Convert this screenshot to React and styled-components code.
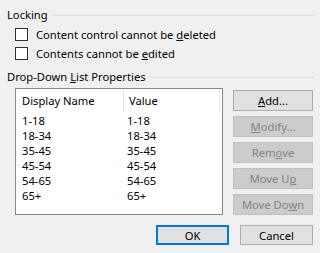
import React from "react";
import styled, { createGlobalStyle } from "styled-components";

const GlobalStyle = createGlobalStyle`
    html, body {
        margin: 0;
        padding: 0;
        background: #f0f0f0;
    }
    body {
        font-family: "Noto Sans", "Liberation Sans", sans-serif;
        font-size: 11.2px;
        color: #000;
    }
`

const rows = [
    ['1-18', '1-18'],
    ['18-34', '18-34'],
    ['35-45', '35-45'],
    ['45-54', '45-54'],
    ['54-65', '54-65'],
    ['65+', '65+'],
];

const sideButtons = [
    { label: <><u>A</u>dd...</>, enabled: true },
    { label: <><u>M</u>odify...</> },
    { label: <>Rem<u>o</u>ve</> },
    { label: <>Move U<u>p</u></> },
    { label: <>Move Do<u>w</u>n</> },
];

//Content control properties dialog (lower part)
const App = () => {
    return (
        <>
            <GlobalStyle />
            <Dialog>
                <GroupHeader top={7}>
                    <span>Locking</span>
                    <Rule />
                </GroupHeader>
                <CheckRow top={5}>
                    <Box />
                    <span>Content control cannot be <u>d</u>eleted</span>
                </CheckRow>
                <CheckRow top={6}>
                    <Box />
                    <span>Contents cannot be <u>e</u>dited</span>
                </CheckRow>
                <GroupHeader top={9}>
                    <span>Drop-Down <u>L</u>ist Properties</span>
                    <Rule />
                </GroupHeader>
                <Body>
                    <ListBox>
                        <HeaderRow>
                            <HeaderCell width={108}>Display Name</HeaderCell>
                            <HeaderCell width={97}>Value</HeaderCell>
                        </HeaderRow>
                        {rows.map(([name, value]) => (
                            <ItemRow key={name}>
                                <Cell width={105}>{name}</Cell>
                                <Cell>{value}</Cell>
                            </ItemRow>
                        ))}
                    </ListBox>
                    <ButtonColumn>
                        {sideButtons.map((b, i) => (
                            <SideButton key={i} disabled={!b.enabled}>{b.label}</SideButton>
                        ))}
                    </ButtonColumn>
                </Body>
                <Footer>
                    <DialogButton isDefault>OK</DialogButton>
                    <DialogButton>Cancel</DialogButton>
                </Footer>
            </Dialog>
        </>
    )
}

export default App;

const Dialog = styled.div`
    width: 319px;
    height: 253px;
    box-sizing: border-box;
    padding: 0 5px 0 7px;
    overflow: hidden;
`

const GroupHeader = styled.div`
    display: flex;
    align-items: center;
    height: 16px;
    margin-top: ${props => props.top}px;
    line-height: 16px;
    white-space: nowrap;
`

const Rule = styled.div`
    flex: 1;
    height: 1px;
    margin-left: 5px;
    background: #dcdcdc;
`

const CheckRow = styled.div`
    display: flex;
    align-items: center;
    height: 13px;
    margin-top: ${props => props.top}px;
    padding-left: 8px;
    line-height: 13px;
    white-space: nowrap;
`

const Box = styled.div`
    width: 13px;
    height: 13px;
    box-sizing: border-box;
    border: 1px solid #333333;
    background: #ffffff;
    margin-right: 8px;
    flex-shrink: 0;
`

const Body = styled.div`
    display: flex;
    align-items: flex-start;
    margin-top: 3px;
    padding-left: 8px;
`

const ListBox = styled.div`
    width: 208px;
    height: 127px;
    box-sizing: border-box;
    border: 1px solid #828790;
    background: #ffffff;
    padding: 1px 2px 0 1px;
`

const HeaderRow = styled.div`
    display: flex;
    height: 22px;
    margin-bottom: 1px;
`

const HeaderCell = styled.div`
    width: ${props => props.width}px;
    box-sizing: border-box;
    padding: 3px 0 0 5px;
    border-right: 1px solid #e5e5e5;
    line-height: 16px;
`

const ItemRow = styled.div`
    display: flex;
    height: 15px;
    line-height: 15px;
    padding-left: 5px;
`

const Cell = styled.div`
    width: ${props => props.width ? props.width + 'px' : 'auto'};
    white-space: nowrap;
`

const ButtonColumn = styled.div`
    display: flex;
    flex-direction: column;
    gap: 5px;
    margin-left: 10px;
    margin-top: 2px;
`

const SideButton = styled.div`
    width: 80px;
    height: 21px;
    box-sizing: border-box;
    display: flex;
    align-items: center;
    justify-content: center;
    border: 1px solid ${props => props.disabled ? '#bfbfbf' : '#adadad'};
    background: ${props => props.disabled ? '#cccccc' : '#e1e1e1'};
    color: ${props => props.disabled ? '#838383' : '#000000'};
    white-space: nowrap;
`

const Footer = styled.div`
    display: flex;
    justify-content: flex-end;
    gap: 11px;
    margin-top: 10px;
    padding-right: 1px;
`

const DialogButton = styled.div`
    width: 73px;
    height: 20px;
    box-sizing: border-box;
    display: flex;
    align-items: center;
    justify-content: center;
    border: ${props => props.isDefault ? '2px solid #0078d7' : '1px solid #adadad'};
    background: #e1e1e1;
`
